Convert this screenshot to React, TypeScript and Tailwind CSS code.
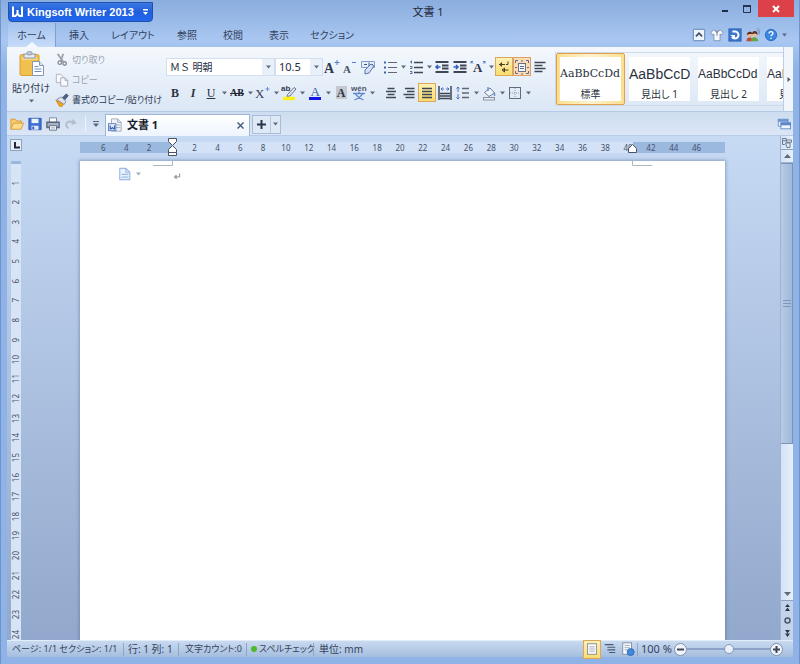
import React, { useState } from 'react';

const menuTabs = [
  { label: 'ホーム', width: 'w-12' },
  { label: '挿入', width: 'w-[46px]' },
  { label: 'レイアウト', width: 'w-[62px]' },
  { label: '参照', width: 'w-[46px]' },
  { label: '校閲', width: 'w-[46px]' },
  { label: '表示', width: 'w-[46px]' },
  { label: 'セクション', width: 'w-[60px]' },
];

const styles = [
  { name: '標準', font: 'font-["DejaVu_Serif",serif] text-[11px]' },
  { name: '見出し 1', font: 'font-["Liberation_Sans",sans-serif] text-[14px]' },
  { name: '見出し 2', font: 'font-["Liberation_Sans",sans-serif] text-[12px]' },
  { name: '見出し 3', font: 'font-["Liberation_Sans",sans-serif] text-[12px]' },
];

const rulerNumbers = [6, 4, 2, 0, ...Array.from({ length: 23 }, (_, i) => (i + 1) * 2)];
const sideNumbers = Array.from({ length: 24 }, (_, i) => i + 1);

interface IconProps {
  children: React.ReactNode;
  size?: string;
}

const Icon: React.FC<IconProps> = ({ children, size = 'size-4' }) => (
  <svg className={`${size} shrink-0`} viewBox="0 0 16 16" fill="none" stroke="#3f4756" aria-hidden="true">
    {children}
  </svg>
);

const Caret: React.FC<{ color?: string }> = ({ color = '#5c6a80' }) => (
  <svg className="h-1 w-[5px] shrink-0" viewBox="0 0 5 4" aria-hidden="true">
    <path d="M0 0.5h5L2.5 3.5z" fill={color} />
  </svg>
);

interface ToolProps {
  label: string;
  children: React.ReactNode;
  menu?: boolean;
  active?: boolean;
}

const Tool: React.FC<ToolProps> = ({ label, children, menu, active }) => (
  <div className="flex shrink-0 items-center">
    <button
      aria-label={label}
      title={label}
      className={`flex h-[19px] w-[18px] items-center justify-center border ${
        active ? 'border-[#d9a85c] bg-linear-to-b from-[#fdf0b4] to-[#fbdc6c]' : 'border-transparent'
      }`}
    >
      {children}
    </button>
    {menu && (
      <button aria-label={`${label} メニュー`} className="flex h-[19px] w-2 items-center justify-center">
        <Caret />
      </button>
    )}
  </div>
);

const AlignIcon: React.FC<{ d: string }> = ({ d }) => (
  <Icon><path d={d} strokeWidth="1.4" /></Icon>
);

const TitleBar = () => (
  <header className="relative flex h-[23px] shrink-0 items-start justify-between pl-2 pr-[6px]">
    <button className="mt-[2px] flex h-5 w-[145px] items-center rounded-b-sm border border-[#2350ad] bg-linear-to-b from-[#3b78e4] via-[#205fdd] to-[#2168ec] text-white">
      <svg className="ml-[2px] h-3 w-3" viewBox="0 0 12 12" fill="none" stroke="#fff" strokeWidth="2" aria-hidden="true">
        <path d="M2 0.5V10h2.500l2-2.500L8.500 10H11V0.500M6.500 4v4" />
      </svg>
      <span className="ml-1 font-['Liberation_Sans',sans-serif] text-[11px] font-bold whitespace-nowrap">Kingsoft Writer 2013</span>
      <svg className="ml-auto mr-1 h-[7px] w-[5px]" viewBox="0 0 5 7" aria-hidden="true">
        <path d="M0 0h5v1.5H0zM0 3h5L2.5 6z" fill="#fff" />
      </svg>
    </button>
    <h1 className="absolute inset-x-0 top-1 pl-14 text-center text-[11px] leading-4 text-[#1f2a3c]">文書 1</h1>
    <div className="flex">
      <button aria-label="最小化" className="flex h-[17px] w-[22px] items-center justify-center">
        <svg className="h-3 w-3" viewBox="0 0 12 12" aria-hidden="true"><path d="M3 7h6v2H3z" fill="#1f2c44" /></svg>
      </button>
      <button aria-label="最大化" className="flex h-[17px] w-[22px] items-center justify-center">
        <svg className="h-3 w-3" viewBox="0 0 12 12" fill="none" stroke="#26344e" aria-hidden="true">
          <path d="M2.5 3v6.5h7V3" /><path d="M2 3h8" strokeWidth="2" />
        </svg>
      </button>
      <button aria-label="閉じる" className="flex h-[17px] w-9 items-center justify-center bg-[#dc4048]">
        <svg className="h-2 w-2" viewBox="0 0 8 8" stroke="#fff" strokeWidth="2" aria-hidden="true"><path d="M1 1l6 6M7 1L1 7" /></svg>
      </button>
    </div>
  </header>
);

interface MenuTabsProps {
  current: string;
  onSelect: (label: string) => void;
}

const MenuTabs: React.FC<MenuTabsProps> = ({ current, onSelect }) => (
  <nav className="flex h-6 shrink-0 justify-between px-2">
    <div className="flex">
      {menuTabs.map((tab) => (
        <button
          key={tab.label}
          onClick={() => onSelect(tab.label)}
          className={`relative flex items-center justify-center text-[10px] whitespace-nowrap text-[#33415c] ${tab.width} ${
            current === tab.label ? 'border-r border-[#7f9fd0] bg-linear-to-b from-[#a5c3ee] to-[#c6dcf8]' : ''
          }`}
        >
          {tab.label}
          {current === tab.label && (
            <svg className="absolute bottom-0 left-1/2 h-[5px] w-3 -translate-x-1/2" viewBox="0 0 12 5" aria-hidden="true">
              <path d="M0 5L6 0l6 5z" fill="#f4f8fd" />
            </svg>
          )}
        </button>
      ))}
    </div>
    <div className="flex items-center gap-1">
      <button aria-label="リボンを隠す">
        <Icon size="size-3.5">
          <rect x="1.5" y="1.5" width="13" height="13" rx="1" fill="#eef4fc" stroke="#5377ad" />
          <path d="M4.5 9.5L8 6l3.5 3.5" strokeWidth="2" stroke="#3f4c66" />
        </Icon>
      </button>
      <button aria-label="スキン">
        <Icon size="size-3.5">
          <path d="M4.5 2L1 5l2 3 1.500-1v7.500h7V7L13 8l2-3-3.500-3-1.500 1L8 5 6 3z" fill="#f4f7fc" stroke="#7b8fb2" />
          <path d="M6 2.500l2 3 2-3M8 5.500V9" stroke="#6b7892" />
        </Icon>
      </button>
      <button aria-label="更新">
        <Icon size="size-3.5">
          <rect x="1" y="1" width="14" height="14" fill="#3d77cc" stroke="#2f62b3" />
          <path d="M5 4h3a4 4 0 1 1-3.500 6" stroke="#fff" strokeWidth="2.200" />
          <path d="M2.500 8h5.500v4z" fill="#fff" stroke="none" />
        </Icon>
      </button>
      <button aria-label="コミュニティ">
        <Icon size="size-3.5">
          <circle cx="4" cy="8" r="2.800" fill="#e9b58b" stroke="none" />
          <circle cx="9.500" cy="7" r="3" fill="#f0c49a" stroke="none" />
          <path d="M1 8c0-5 6-4 6-2 1-4 7-3 6 2-2-2-4-2-5-1-2 0-4-1-7 1z" fill="#5b2c20" stroke="none" />
          <path d="M0.500 15c0-5 6-5 6.500-2v2z" fill="#c64639" stroke="none" />
          <path d="M5.500 15c0-6 8-6 8.500 0z" fill="#63a83c" stroke="none" />
          <path d="M12 2.500c2 0 2.500 2 1.500 4M13 0.500c3 1 3 4 2 7" stroke="#6f88b5" />
        </Icon>
      </button>
      <button aria-label="ヘルプ">
        <Icon size="size-3.5">
          <circle cx="8" cy="8" r="6.500" fill="#3a86e0" stroke="#2768b9" />
          <path d="M5.800 6.200c0-3 4.600-2.700 4.400 0C10.200 7.700 8 7.700 8 9.500M8 11v1.700" stroke="#fff" strokeWidth="1.500" />
        </Icon>
      </button>
      <button aria-label="ヘルプ メニュー" className="mr-1 flex h-4 w-[6px] items-center"><Caret /></button>
    </div>
  </nav>
);

const ClipboardGroup = () => (
  <div className="flex w-[159px] shrink-0">
    <button className="flex w-[48px] shrink-0 flex-col items-center pt-1 text-[10px] leading-[14px] whitespace-nowrap text-[#2c3a54]">
      <svg className="mb-[3px] h-[27px] w-[27px]" viewBox="0 0 27 27" aria-hidden="true">
        <rect x="2" y="3.500" width="19" height="21" rx="1.500" fill="#f2c04f" stroke="#d9a034" />
        <path d="M4 6h15v3H4z" fill="#f8d782" />
        <rect x="6" y="3" width="11" height="4" fill="#e8ecf3" stroke="#8e99ab" />
        <rect x="9" y="0.800" width="5" height="3" rx="1" fill="#c9d0dc" stroke="#8e99ab" />
        <path d="M14.500 10.500h7l4 4v10h-11z" fill="#fff" stroke="#8395b5" />
        <path d="M21.500 10.500v4h4" fill="#dce5f3" stroke="#8395b5" />
        <path d="M16.500 15.500h4M16.500 18h7M16.500 20.500h7" stroke="#6e8fc4" />
      </svg>
      貼り付け
      <span className="mt-1"><Caret /></span>
    </button>
    <div className="flex flex-col gap-1 pt-[5px] text-[9px]">
      <button disabled className="flex h-4 items-center gap-[3px] text-[#9aa3b1]">
        <Icon size="size-3.5">
          <path d="M3 1l6.500 9M9.500 1L6.500 9" stroke="#9ea4ae" strokeWidth="2" />
          <circle cx="5.500" cy="11" r="2" stroke="#858b96" strokeWidth="1.500" />
          <circle cx="11" cy="12" r="2" stroke="#858b96" strokeWidth="1.500" />
        </Icon>
        切り取り
      </button>
      <button disabled className="flex h-4 items-center gap-[3px] text-[#9aa3b1]">
        <Icon size="size-3.5">
          <path d="M1.500 1.500h5l2.500 2.500v7H1.500z" fill="#f7f9fc" stroke="#a9afba" />
          <path d="M6.500 5.500h5l3 3v6.500h-8z" fill="#f7f9fc" stroke="#a0a7b3" />
          <path d="M11.500 5.500v3h3" stroke="#a0a7b3" />
        </Icon>
        コピー
      </button>
      <button className="flex h-4 items-center gap-[3px] whitespace-nowrap text-[#2c3a54]">
        <Icon size="size-3.5">
          <path d="M8.500 5.500L13 1l2 2-4 5z" fill="#4e6389" stroke="#34486d" />
          <path d="M2 7.500l5-3 5.500 5-2 3.500z" fill="#dfe5ef" stroke="#7e8899" />
          <path d="M1 8l8.500 5-1.500 2.500-3-0.500z" fill="#f3a81e" stroke="#cf8a1f" />
        </Icon>
        書式のコピー/貼り付け
      </button>
    </div>
  </div>
);

interface ComboProps {
  label: string;
  options: string[];
  className: string;
}

const Combo: React.FC<ComboProps> = ({ label, options, className }) => (
  <div className={`relative h-[18px] shrink-0 border border-[#d3dfee] bg-[#e9f0f9] pr-3 ${className}`}>
    <select
      aria-label={label}
      className="block h-4 w-full appearance-none bg-white pl-[3px] leading-4 text-[#222c3d] outline-none [font-feature-settings:normal]"
    >
      {options.map((o) => <option key={o}>{o}</option>)}
    </select>
    <span className="pointer-events-none absolute inset-y-0 right-[3px] flex items-center"><Caret /></span>
  </div>
);

const FormatTools = () => (
  <div className="flex shrink-0 flex-col gap-[7px] pt-[10px]">
    <div className="flex items-center">
      <Combo label="フォント" options={['ＭＳ 明朝', 'ＭＳ ゴシック']} className="w-[109px] text-[10px]" />
      <Combo label="フォント サイズ" options={['10.5', '12', '14']} className="w-12 text-[11px]" />
      <Tool label="フォントの拡大">
        <Icon><text x="0" y="14" fontSize="14" fontWeight="bold" fontFamily="Liberation Serif" fill="#30384a" stroke="none">A</text><path d="M10.500 3.500h5M13 1v5" stroke="#5a7cc0" /></Icon>
      </Tool>
      <Tool label="フォントの縮小">
        <Icon><text x="1" y="14" fontSize="11" fontWeight="bold" fontFamily="Liberation Serif" fill="#4b5468" stroke="none">A</text><path d="M10 3.500h4" stroke="#5a7cc0" /></Icon>
      </Tool>
      <Tool label="書式のクリア">
        <Icon>
          <path d="M1.500 2.500h13v6h-13z" fill="#e6eefb" stroke="#7f9cd0" />
          <path d="M4 5.500h3M9 3.500v4M11 5.500h2" stroke="#42557d" />
          <path d="M5 11l6-6 3 2-5 7-4 1z" fill="#d5e1f5" stroke="#5a76ac" />
        </Icon>
      </Tool>
      <div className="ml-1 flex">
        <Tool label="箇条書き" menu>
          <Icon><path d="M6 3.500h9M6 8.500h9M6 13.500h9" stroke="#606878" /><path d="M2 3.500h2M2 8.500h2M2 13.500h2" stroke="#3c62b5" strokeWidth="2" /></Icon>
        </Tool>
        <Tool label="段落番号" menu>
          <Icon><path d="M6 3.500h9M6 8.500h9M6 13.500h9" stroke="#3f4756" strokeWidth="1.300" /><path d="M3.500 1.500v3M2 3h1.500M2 7.500h2v2H2M2 12.500h2v2H2" stroke="#55709f" /></Icon>
        </Tool>
        <Tool label="インデントを減らす">
          <Icon><path d="M1.500 3h13M8 6.500h6.500M8 9.500h6.500M1.500 13h13" strokeWidth="1.800" /><path d="M6.500 8H2M4 6L2 8l2 2" stroke="#3560bd" strokeWidth="1.600" /></Icon>
        </Tool>
        <Tool label="インデントを増やす">
          <Icon><path d="M1.500 3h13M8 6.500h6.500M8 9.500h6.500M1.500 13h13" strokeWidth="1.800" /><path d="M1.500 8H6M4 6l2 2-2 2" stroke="#3560bd" strokeWidth="1.600" /></Icon>
        </Tool>
        <Tool label="拡張書式" menu>
          <Icon><text x="3" y="13" fontSize="13" fontWeight="bold" fontFamily="Liberation Serif" fill="#30384a" stroke="none">A</text><path d="M1 2.500l2 2M3 2.500h-2v2M15 2.500l-2 2M13 2.500h2v2" stroke="#4d74c4" /></Icon>
        </Tool>
        <Tool label="編集記号の表示" active>
          <Icon><path d="M3 5.500h6M5.500 3.500v4M3.500 5.500l2-1.500v3zM12 2.500v3h-2M6 11h6.500M8.500 9v4M6 11l2.500-2v4z" stroke="#4a4128" /></Icon>
        </Tool>
        <button aria-label="段落レイアウト" title="段落レイアウト" className="flex h-[19px] w-[18px] items-center justify-center border border-[#dfa067] bg-[#fbdcb4]">
          <Icon>
            <rect x="4.500" y="4.500" width="7" height="8" fill="#f3f6fb" stroke="#65728a" />
            <path d="M6 7.500h4M6 9.500h4" stroke="#65728a" />
            <path d="M1.500 4V1.500H4M12 1.500h2.500V4M14.500 12v2.500H12M4 14.500H1.500V12M8 1v2M8 14v2M1 8.500h2M13 8.500h2" stroke="#5c6c91" />
          </Icon>
        </button>
        <Tool label="左揃え"><AlignIcon d="M2.500 3.500h11M2.500 6.500h8M2.500 9.500h11M2.500 12.500h8" /></Tool>
      </div>
    </div>
    <div className="flex items-center">
      <Tool label="太字"><span className="font-['Liberation_Serif',serif] text-[12px] leading-4 font-bold text-[#2b3343]">B</span></Tool>
      <Tool label="斜体"><span className="font-['Liberation_Serif',serif] text-[12px] leading-4 font-bold text-[#2b3343] italic">I</span></Tool>
      <Tool label="下線" menu><span className="font-['Liberation_Serif',serif] text-[12px] leading-4 text-[#2b3343] underline">U</span></Tool>
      <Tool label="取り消し線" menu><span className="font-['Liberation_Serif',serif] text-[10px] leading-4 font-bold text-[#1d2432] line-through">AB</span></Tool>
      <Tool label="上付き" menu>
        <Icon><text x="0" y="13" fontSize="13" fontFamily="Liberation Serif" fill="#39445c" stroke="none">X</text><path d="M10.500 4h4M12.500 2v4" stroke="#6c8bd0" /></Icon>
      </Tool>
      <Tool label="蛍光ペン" menu>
        <Icon>
          <text x="0" y="6" fontSize="8" fontWeight="bold" fontFamily="Liberation Sans" fill="#333b4b" stroke="none">ab</text>
          <path d="M6.500 9.500L13 2.500l2 1.500-6 7-3 0.500z" fill="#dce5f3" stroke="#6c7789" />
          <path d="M2 13.500h12" stroke="#fdf218" strokeWidth="3.500" />
        </Icon>
      </Tool>
      <Tool label="文字の色" menu>
        <Icon><text x="3.500" y="11" fontSize="13" fontFamily="Liberation Serif" fill="#3b5ea8" stroke="none">A</text><path d="M2 13.500h12" stroke="#1414e6" strokeWidth="3" /></Icon>
      </Tool>
      <Tool label="文字の網かけ"><span className="flex h-[13px] w-[11px] items-center justify-center bg-[#c4c8cf] font-['Liberation_Serif',serif] text-[12px] font-bold text-[#2b3343]">A</span></Tool>
      <Tool label="ルビ" menu>
        <Icon><text x="0" y="6" fontSize="8" fontWeight="bold" fontFamily="Liberation Sans" fill="#4c5567" stroke="none">wén</text><path d="M2 8.500h12M8 6.500v2M4.500 9c2 3 4 4.500 8 6M11.500 9c-2 3-4 4.500-8 6" stroke="#6187cf" strokeWidth="1.300" /></Icon>
      </Tool>
      <div className="ml-[6px] flex">
        <Tool label="中央揃え"><AlignIcon d="M4.500 3.500h7M3 6.500h10M4.500 9.500h7M3 12.500h10" /></Tool>
        <Tool label="右揃え"><AlignIcon d="M4 3.500h9.500M6 6.500h7.500M2.500 9.500h11M4.500 12.500h9" /></Tool>
        <Tool label="両端揃え" active><AlignIcon d="M3 3.500h10M3 6.500h10M3 9.500h10M3 12.500h10" /></Tool>
        <Tool label="均等割り付け">
          <Icon><path d="M2 1v14M14 1v14M3 8.500h10M3 11h10M3 13.500h10" strokeWidth="1.500" /><path d="M4 4h3M9 4h3M5.500 2.500L4 4l1.500 1.500M10.500 2.500L12 4l-1.500 1.500" stroke="#4a70c0" /></Icon>
        </Tool>
        <Tool label="行間" menu>
          <Icon><path d="M7 3.500h7M7 8h7M7 12.500h7" stroke="#606878" strokeWidth="1.300" /><path d="M3 2v5M1.500 3.500L3 2l1.500 1.500M3 9v5M1.500 12.500L3 14l1.500-1.500" stroke="#4a70c0" /></Icon>
        </Tool>
        <Tool label="塗りつぶし" menu>
          <Icon>
            <path d="M3.500 7.500L9 3l4.500 5L8 11.500z" fill="#eef3fa" stroke="#707d95" />
            <path d="M7 2v4M13.500 8v3" stroke="#6b8fd4" strokeWidth="1.500" />
            <rect x="2.500" y="12.500" width="11" height="2.500" fill="#e9edf3" stroke="#8a92a0" />
          </Icon>
        </Tool>
        <Tool label="罫線" menu>
          <Icon><rect x="2.500" y="2.500" width="11" height="11" stroke="#626b7c" /><path d="M8 3v10M3 8h10" stroke="#9099a8" strokeDasharray="1 1" /></Icon>
        </Tool>
      </div>
    </div>
  </div>
);

const StyleGallery = () => {
  const [selected, setSelected] = useState('標準');

  return (
    <div className="ml-auto flex min-w-0">
      <div className="my-[5px] flex w-[228px] overflow-hidden border-y border-l border-[#cbd9eb]">
        {styles.map((style) => (
          <button
            key={style.name}
            onClick={() => setSelected(style.name)}
            className={`flex w-[69px] shrink-0 rounded-xs border p-[3px] ${
              selected === style.name
                ? 'border-[#e0a04c] bg-linear-to-r from-[#fbdf8e] via-[#fdf3d0] to-[#fbdf8e]'
                : 'border-transparent'
            }`}
          >
            <span className="flex h-full w-full flex-col overflow-hidden bg-white text-[#2a3140]">
              <span className={`flex h-[26px] shrink-0 items-end leading-[18px] ${style.font}`}>AaBbCcDd</span>
              <span className="pt-1 text-center text-[10px] leading-[14px] whitespace-nowrap">{style.name}</span>
            </span>
          </button>
        ))}
      </div>
      <button aria-label="その他のスタイル" className="flex w-[10px] shrink-0 items-center justify-center border-l border-[#bccde4] bg-[#f1f6fc]">
        <svg className="h-[5px] w-1" viewBox="0 0 4 5" aria-hidden="true"><path d="M0.500 0v5l3-2.500z" fill="#4a566b" /></svg>
      </button>
    </div>
  );
};

const QuickAccess = () => (
  <div className="flex h-6 shrink-0 items-center border-b border-[#b7cbe6] bg-linear-to-b from-[#cddcef] to-[#dbe7f6]">
    <div className="flex w-[98px] shrink-0 items-center gap-1 pl-[3px]">
      <button aria-label="開く">
        <Icon size="size-3.5">
          <path d="M1 14V2.500h5l1.500 2H13v3" fill="#f6cb6b" stroke="#d89a35" />
          <path d="M1 14L4 7h11.500L12.500 14z" fill="#fbdc8b" stroke="#d89a35" />
        </Icon>
      </button>
      <button aria-label="保存">
        <Icon size="size-3.5">
          <path d="M1 1.500h14v13H1z" fill="#3f6fd4" stroke="#2b54b3" />
          <path d="M4 2h8v5H4z" fill="#eef4fd" stroke="none" />
          <path d="M4 10h8v4.500H4z" fill="#dfe8f7" stroke="none" /><path d="M6 11v3" stroke="#2b54b3" strokeWidth="2" />
        </Icon>
      </button>
      <button aria-label="印刷">
        <Icon size="size-3.5">
          <path d="M4 1h8v5H4z" fill="#fff" stroke="#6f7e96" />
          <path d="M1 6h14v6H1z" fill="#a6b2c5" stroke="#56647c" strokeWidth="1.500" />
          <path d="M4 10h8v5H4z" fill="#fff" stroke="#56647c" /><path d="M5.500 12.500h5" stroke="#7e8ca4" />
        </Icon>
      </button>
      <button aria-label="やり直し" disabled>
        <Icon size="size-3.5">
          <path d="M5 13C0 9 3 3 11 6" stroke="#b4bcc8" strokeWidth="2.200" /><path d="M10 2l4.500 5-6 2z" fill="#b4bcc8" stroke="none" />
        </Icon>
      </button>
      <span className="ml-[3px] h-4 w-px bg-[#eef4fb]" />
      <button aria-label="クイック アクセスのカスタマイズ" className="ml-[3px] flex">
        <svg className="h-[6px] w-[6px]" viewBox="0 0 6 6" aria-hidden="true"><path d="M0 0h6v1H0zM0 2.500h6L3 6z" fill="#59677e" /></svg>
      </button>
    </div>
    <div className="mt-[2px] flex h-[22px] w-[145px] shrink-0 items-center border-x border-t border-[#9db5d6] bg-linear-to-b from-white to-[#eef5fd] pr-[5px] pl-[2px]">
      <Icon size="size-3.5">
        <path d="M4 1h7l4 4v10H4z" fill="#f0f3f8" stroke="#9aa5b7" /><path d="M11 1v4h4" stroke="#9aa5b7" /><path d="M9 8h5M9 11h5" stroke="#9aa5b7" />
        <rect x="0.500" y="6.500" width="8.500" height="8" fill="#e6eefb" stroke="#5279bd" />
        <path d="M2.500 8.500v4h1l1.500-1.500 1.500 1.500h1v-4" stroke="#2f5fb5" strokeWidth="1.400" />
      </Icon>
      <span className="ml-[5px] text-[11px] font-bold text-[#161d2a]">文書 1</span>
      <button aria-label="タブを閉じる" className="ml-auto">
        <svg className="h-[7px] w-[7px]" viewBox="0 0 7 7" stroke="#4d5f80" strokeWidth="1.500" aria-hidden="true"><path d="M0.500 0.500l6 6M6.500 0.500l-6 6" /></svg>
      </button>
    </div>
    <div className="mt-px ml-[2px] flex h-[19px] border border-[#a9bdd9] bg-[#dfe9f6]">
      <button aria-label="新しい文書" className="flex w-[17px] items-center justify-center">
        <svg className="h-[9px] w-[9px]" viewBox="0 0 9 9" stroke="#27344d" strokeWidth="2" aria-hidden="true"><path d="M4.500 0v9M0 4.500h9" /></svg>
      </button>
      <button aria-label="新規メニュー" className="flex w-[10px] items-center justify-center border-l border-[#b7c8df]"><Caret /></button>
    </div>
    <button aria-label="ウィンドウの切り替え" className="mr-[2px] ml-auto">
      <Icon size="size-3.5">
        <rect x="1.500" y="2.500" width="11" height="8" fill="#edf4fd" stroke="#6c93cf" /><path d="M1 4h12" stroke="#6c93cf" strokeWidth="3" />
        <rect x="4.500" y="6.500" width="11" height="7" fill="#edf4fd" stroke="#5c86c7" /><path d="M4 8h12" stroke="#5c86c7" strokeWidth="3" />
      </Icon>
    </button>
  </div>
);

const HorizontalRuler = () => (
  <div className="flex h-[25px] shrink-0 justify-center pt-[6px]">
    <div className="relative h-[11px] w-[645px] bg-linear-to-r from-[#9bb8de] from-[92px] via-[#d3e2f6] via-[92px] to-[#d3e2f6]">
      <div className="absolute inset-y-0 right-0 w-[92px] bg-[#9bb8de]" />
      <div className="relative flex h-full items-center pr-[17px] pl-3 font-['Noto_Sans',sans-serif] text-[8px] leading-[11px] text-[#46536b]">
        {rulerNumbers.map((n, i) => (
          <span key={i} className="flex-1 basis-0 text-center">{n === 0 ? '' : n}</span>
        ))}
      </div>
      <svg className="absolute -top-1 left-[88px] h-[19px] w-[9px]" viewBox="0 0 9 19" fill="#fff" stroke="#4a5160" aria-hidden="true">
        <path d="M0.500 0.500h8v3l-4 4-4-4z" /><path d="M0.500 14.500v-3l4-4 4 4v3z" /><path d="M0.500 14.500h8v3h-8z" />
      </svg>
      <svg className="absolute top-[2px] right-[88px] h-[9px] w-[9px]" viewBox="0 0 9 9" fill="#fff" stroke="#4a5160" aria-hidden="true">
        <path d="M0.500 8.500v-4l4-4 4 4v4z" />
      </svg>
    </div>
  </div>
);

const Page = () => (
  <main className="relative mx-auto w-[645px] flex-1 bg-white shadow-[0_0_3px_1px_rgba(70,95,140,0.45)]">
    <svg className="absolute top-0 left-[73px] h-[5px] w-5" viewBox="0 0 20 5" fill="none" stroke="#b3b7bd" aria-hidden="true"><path d="M0 4.500h19.500V0" /></svg>
    <svg className="absolute top-0 right-[73px] h-[5px] w-5" viewBox="0 0 20 5" fill="none" stroke="#b3b7bd" aria-hidden="true"><path d="M20 4.500H0.500V0" /></svg>
    <div className="flex items-center pt-[6px] pl-[38px]">
      <button aria-label="ページ設定" className="flex items-center gap-1">
        <Icon size="size-3.5">
          <path d="M2 1.500h7l4.500 4.500v8.500H2z" fill="#eaf2fd" stroke="#9bb9e4" strokeWidth="1.300" />
          <path d="M9 1.500V6h4.500M4 8.500h8M4 11.500h8" stroke="#9bb9e4" strokeWidth="1.300" />
        </Icon>
        <Caret color="#a3acb9" />
      </button>
      <svg className="mt-1 ml-8 h-[7px] w-2" viewBox="0 0 9 8" fill="none" stroke="#7c838e" aria-hidden="true"><path d="M7.500 0.500v4h-6M3.500 2.500l-2 2 2 2z" /></svg>
    </div>
  </main>
);

const SideRuler = () => (
  <div className="flex w-[18px] shrink-0 flex-col overflow-hidden pt-[3px]">
    <button aria-label="タブの種類" className="ml-[3px] flex size-3 shrink-0 items-center justify-center border border-[#93a3bb] bg-[#e6eef8]">
      <svg className="h-[7px] w-[7px]" viewBox="0 0 7 7" fill="none" stroke="#202838" strokeWidth="2" aria-hidden="true"><path d="M2 0v5.500h5" /></svg>
    </button>
    <div className="mt-[10px] ml-[4px] flex w-[10px] flex-1 flex-col bg-[#d7e4f5]">
      <div className="h-[3px] shrink-0 bg-[#9bb8de]" />
      <div className="flex h-[480px] shrink-0 flex-col pt-[9px] font-['Noto_Sans',sans-serif] text-[8px] leading-[10px] text-[#46536b]">
        {sideNumbers.map((n) => (
          <span key={n} className="flex flex-1 basis-0 items-center justify-center">
            <span className="rotate-180 [writing-mode:vertical-rl]">{n}</span>
          </span>
        ))}
      </div>
    </div>
  </div>
);

const ScrollBar = () => (
  <div className="flex w-[13px] shrink-0 flex-col border-l border-[#9fb3d2] bg-linear-to-r from-[#d5e3f6] to-[#e6effb]">
    <button aria-label="ルーラー" className="flex h-[14px] shrink-0 items-center justify-center border-b border-[#8ea2c2]">
      <Icon size="size-3"><path d="M2 2h5v3H2zM2 5v5h3M7 4h7v3H7zM6 8h6v6H8z" stroke="#69778f" strokeWidth="1.300" /></Icon>
    </button>
    <button aria-label="上へスクロール" className="flex h-[13px] shrink-0 items-center justify-center border-b border-[#9fb3d2]">
      <svg className="h-1 w-[7px]" viewBox="0 0 7 4" aria-hidden="true"><path d="M0 4h7L3.500 0z" fill="#5d6879" /></svg>
    </button>
    <div className="flex flex-1 flex-col">
      <div className="flex h-[66%] items-center justify-center border border-l-0 border-[#7f93b5] bg-linear-to-r from-[#b7cbe5] to-[#9fb9da]">
        <svg className="h-[7px] w-2" viewBox="0 0 8 7" stroke="#8198bd" aria-hidden="true"><path d="M0 0.500h8M0 3.500h8M0 6.500h8" /></svg>
      </div>
    </div>
    <button aria-label="下へスクロール" className="flex h-[13px] shrink-0 items-center justify-center border-b border-[#8ea2c2]">
      <svg className="h-1 w-[7px]" viewBox="0 0 7 4" aria-hidden="true"><path d="M0 0h7L3.500 4z" fill="#5d6879" /></svg>
    </button>
    <div className="flex h-[39px] shrink-0 flex-col items-center justify-around bg-[#c3d4ea]">
      <button aria-label="前へ">
        <svg className="h-[7px] w-[7px]" viewBox="0 0 7 7" aria-hidden="true"><path d="M3.500 0L6 3H1zM3.500 3.500L6 7H1z" fill="#2d374a" /></svg>
      </button>
      <button aria-label="ジャンプ先の選択">
        <svg className="h-[7px] w-[7px]" viewBox="0 0 7 7" fill="none" stroke="#4a566b" strokeWidth="1.500" aria-hidden="true"><circle cx="3.500" cy="3.500" r="2.500" /></svg>
      </button>
      <button aria-label="次へ">
        <svg className="h-[7px] w-[7px]" viewBox="0 0 7 7" aria-hidden="true"><path d="M3.500 3.500L6 0H1zM3.500 7L6 3.500H1z" fill="#2d374a" /></svg>
      </button>
    </div>
  </div>
);

const Separator = () => <span className="h-[13px] w-px shrink-0 bg-[#8fa5c6]" />;

const StatusBar = () => {
  const [zoom, setZoom] = useState(100);

  return (
    <footer className="flex h-[17px] shrink-0 items-center border-t border-[#e3edf9] bg-linear-to-b from-[#c9daf0] to-[#a5bede] text-[10px] whitespace-nowrap text-[#35435c]">
      <span className="w-[116px] shrink-0 pl-[5px] text-[9px]">ページ: 1/1 セクション: 1/1</span>
      <Separator />
      <span className="w-[54px] shrink-0 pl-1">行: 1 列: 1</span>
      <Separator />
      <span className="w-[67px] shrink-0 pl-[6px] text-[9px]">文字カウント:0</span>
      <Separator />
      <span className="flex w-[66px] shrink-0 items-center gap-[2px] pl-1 text-[9px]">
        <span className="size-[6px] shrink-0 rounded-full bg-[#4db828]" />
        スペルチェック
      </span>
      <Separator />
      <span className="shrink-0 pl-[5px]">単位: mm</span>
      <div className="mr-[10px] ml-auto flex items-center">
        <Tool label="印刷レイアウト" active>
          <Icon size="size-3.5"><rect x="3" y="2" width="10" height="12" fill="#f9fafc" stroke="#7d879a" /><path d="M5 5.500h6M5 8h6M5 10.500h6" stroke="#9aa5b8" /></Icon>
        </Tool>
        <Tool label="アウトライン">
          <Icon size="size-3.5"><path d="M2 3h10M5 6h9M5 9h9M7 12h7" stroke="#4c5871" strokeWidth="1.400" /></Icon>
        </Tool>
        <Tool label="Web レイアウト">
          <Icon size="size-3.5"><rect x="2" y="1" width="10" height="13" fill="#f9fafc" stroke="#7d879a" /><path d="M4 4h6M4 6.500h6M4 9h3" stroke="#9aa5b8" /><circle cx="11" cy="11.500" r="4" fill="#3f8ae0" stroke="#2b68b5" /></Icon>
        </Tool>
        <Separator />
        <span className="w-9 pl-[3px] text-[11px]">{zoom} %</span>
        <button aria-label="縮小" onClick={() => setZoom(Math.max(0, zoom - 10))} className="flex size-[13px] items-center justify-center rounded-full border border-[#7d8fae] bg-[#f1f5fb]">
          <svg className="size-[7px]" viewBox="0 0 7 7" stroke="#3c475c" strokeWidth="2" aria-hidden="true"><path d="M0 3.500h7" /></svg>
        </button>
        <input
          type="range"
          aria-label="ズーム"
          min={0}
          max={200}
          value={zoom}
          onChange={(e) => setZoom(Number(e.target.value))}
          className="h-3 w-[83px] appearance-none bg-transparent [&::-webkit-slider-runnable-track]:h-[2px] [&::-webkit-slider-runnable-track]:bg-[#8ba2c6] [&::-webkit-slider-thumb]:-mt-1 [&::-webkit-slider-thumb]:size-[10px] [&::-webkit-slider-thumb]:appearance-none [&::-webkit-slider-thumb]:rounded-full [&::-webkit-slider-thumb]:border [&::-webkit-slider-thumb]:border-[#8496b4] [&::-webkit-slider-thumb]:bg-[#e9f0f9]"
        />
        <button aria-label="拡大" onClick={() => setZoom(Math.min(200, zoom + 10))} className="flex size-[13px] items-center justify-center rounded-full border border-[#7d8fae] bg-[#f1f5fb]">
          <svg className="size-[7px]" viewBox="0 0 7 7" stroke="#3c475c" strokeWidth="2" aria-hidden="true"><path d="M0 3.500h7M3.500 0v7" /></svg>
        </button>
      </div>
    </footer>
  );
};

export default function App() {
  const [tab, setTab] = useState('ホーム');

  return (
    <div className="flex h-screen min-h-[400px] flex-col overflow-hidden border-x border-[#6f93cb] bg-linear-to-b from-[#8aaddf] via-[#a9c7f1] via-[40px] to-[#8fb3e6] to-[70px] font-['Noto_Sans','Noto_Sans_CJK_JP',sans-serif] [font-feature-settings:'palt']">
      <div className="-mx-px flex flex-col">
        <TitleBar />
        <MenuTabs current={tab} onSelect={setTab} />
      </div>
      <div className="mx-[6px] mb-[7px] flex min-h-0 flex-1 flex-col">
        <div className="flex h-[65px] shrink-0 border-b border-[#b5c9e4] bg-linear-to-b from-[#f4f8fd] to-[#dbe7f5]">
          <ClipboardGroup />
          <FormatTools />
          <StyleGallery />
        </div>
        <QuickAccess />
        <div className="flex min-h-0 flex-1 bg-linear-to-b from-[#c6daf4] to-[#92a8cc]">
          <SideRuler />
          <div className="flex min-w-0 flex-1 flex-col overflow-hidden">
            <HorizontalRuler />
            <Page />
          </div>
          <ScrollBar />
        </div>
        <StatusBar />
      </div>
    </div>
  );
}
